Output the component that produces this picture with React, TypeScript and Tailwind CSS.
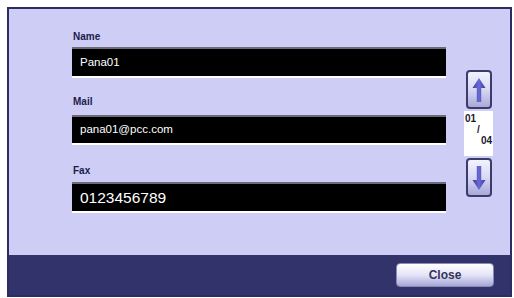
import React from "react";

function Arrow({ down = false }: { down?: boolean }) {
  return (
    <svg width="14" height="26" viewBox="0 0 14 26" className={down ? "rotate-180" : ""}>
      <defs>
        <linearGradient id={down ? "ad" : "au"} x1="0" y1="0" x2="1" y2="0">
          <stop offset="0" stopColor="#3f3fa8" />
          <stop offset="0.5" stopColor="#6a6ad6" />
          <stop offset="1" stopColor="#3a3a9c" />
        </linearGradient>
      </defs>
      <path d="M7 1 L13.5 11 L9.2 11 L9.2 25 L4.8 25 L4.8 11 L0.5 11 Z" fill={`url(#${down ? "ad" : "au"})`} />
    </svg>
  );
}

function ScrollButton({ down = false }: { down?: boolean }) {
  return (
    <div className="w-[26px] h-[39px] rounded-[4px] border-2 border-[#3c3c6a] bg-gradient-to-b from-[#f2f2ff] via-[#d8d8f4] to-[#a9a9d8] flex items-center justify-center">
      <Arrow down={down} />
    </div>
  );
}

function Field({ label, value, big = false, labelClass, fieldClass }: { label: string; value: string; big?: boolean; labelClass: string; fieldClass: string }) {
  return (
    <div>
      <div className={`h-[14px] leading-[14px] text-[10px] font-bold text-[#1c1c4c] pl-[1px] ${labelClass}`}>{label}</div>
      <div className={`w-[374px] bg-black border-t-2 border-t-[#6a6a78] border-b-2 border-b-white flex items-center pl-[8px] text-white ${big ? "text-[15.5px]" : "text-[11.5px]"} ${fieldClass}`}>
        {value}
      </div>
    </div>
  );
}

export default function App() {
  return (
    <div className="w-[514px] h-[298px] bg-white pt-[7px] pl-[7px] pr-[2px] pb-[1px]" style={{ fontFamily: '"Liberation Sans", Arial, sans-serif' }}>
      <div className="w-full h-full border-2 border-[#2c2c62] flex flex-col">
        <div className="flex-1 bg-[#cdcdf6] flex pl-[63px] pt-[21px]">
          <div className="flex flex-col">
            <Field label="Name" value="Pana01" labelClass="" fieldClass="mt-[3px] h-[31px]" />
            <Field label="Mail" value="pana01@pcc.com" labelClass="mt-[17px]" fieldClass="mt-[6px] h-[30px]" />
            <Field label="Fax" value="0123456789" big labelClass="mt-[19px]" fieldClass="mt-[4px] h-[31px]" />
          </div>
          <div className="ml-[20px] pt-[40px] flex flex-col items-start">
            <ScrollButton />
            <div className="w-[29px] ml-[-2px] my-[2px] h-[45px] bg-white flex flex-col text-[10px] font-bold leading-[11px] text-[#1a1a2e] px-[1px] pt-[2px]">
              <span className="self-start">01</span>
              <span className="self-center">/</span>
              <span className="self-end">04</span>
            </div>
            <ScrollButton down />
          </div>
        </div>
        <div className="h-[40px] bg-[#33336c] flex items-center justify-end pr-[16px]">
          <button className="w-[98px] h-[24px] rounded-[4px] border border-[#8a8ab8] bg-gradient-to-b from-[#ffffff] via-[#e4e4f8] to-[#a6a6d6] text-[12px] font-bold text-[#34345a] mb-[1px]">
            Close
          </button>
        </div>
      </div>
    </div>
  );
}
